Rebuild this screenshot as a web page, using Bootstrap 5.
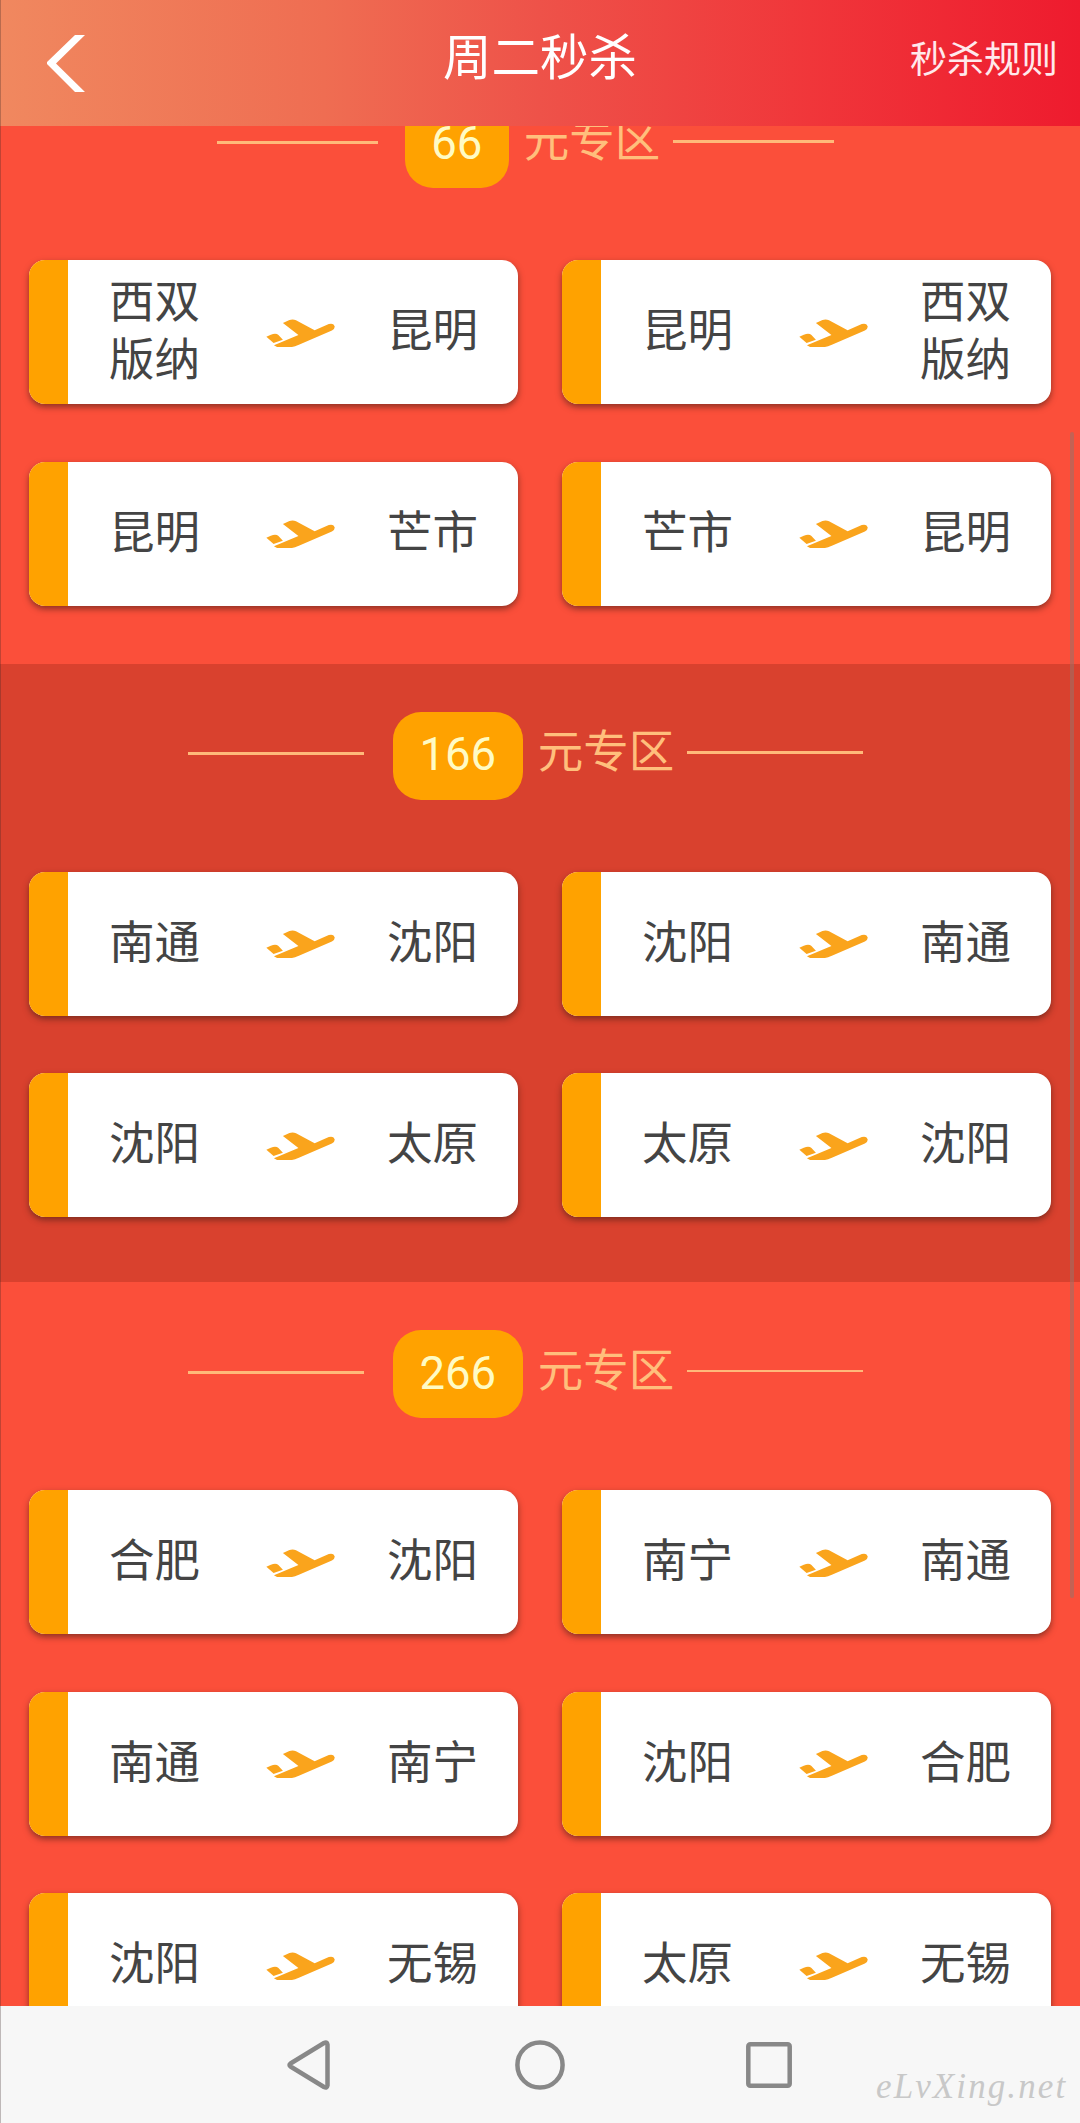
<!DOCTYPE html>
<html lang="zh-CN">
<head>
<meta charset="utf-8">
<meta name="viewport" content="width=device-width, initial-scale=1">
<title>周二秒杀</title>
<link rel="stylesheet" href="https://cdn.jsdelivr.net/npm/bootstrap@5.3.0/dist/css/bootstrap.min.css">
<style>
body { font-family: Roboto, "Noto Sans CJK SC", sans-serif; background: #fb4f3a; }
.phone { width: 1080px; height: 2123px; overflow: hidden; }
.phone-edge { width: 1px; height: 100%; left: 0; top: 0; background: rgba(60,40,40,.3); z-index: 5; }
.topbar { height: 126px; padding: 0 22px 0 47px; background: linear-gradient(90deg, #f0885f 0%, #ef6d52 30%, #ee5249 50%, #f0363a 75%, #ee1b2e 100%); z-index: 2; }
.topbar-side { flex: 1 1 0; }
.topbar-title { font-size: 48.5px; line-height: 70px; margin: -8px 25px 0 0; }
.topbar-side.text-end { margin-left: -25px; }
.topbar-side.text-start { margin-right: -25px; }
.topbar-title { margin-left: 25px; margin-right: 25px; transform: translateX(-12.5px); }
.topbar-rule { font-size: 37px; line-height: 54px; margin-top: -4px; color: #ffe9ec; }
.zone { padding: 48px 29px 65px 29px; background: #fb4f3a; }
.zone-first { margin-top: -74px; padding-bottom: 58px; }
.zone-dark { background: #d9412e; }
.zone-head { height: 88px; margin-bottom: 72px; padding-right: 29px; }
.zone-line { width: 176px; height: 3px; background: #ffb97a; margin-top: -4px; }
.zone-line.end-line { margin-top: -6px; }
.zone-line.thin-line { height: 2px; margin-top: -7px; }
.zone-first .zone-line { width: 161px; }
.price-tag { width: 130px; height: 88px; border-radius: 28px; background: #ffa200; color: #fffbc4; font-size: 45.5px; margin: 0 15px 0 29px; }
.zone-first .price-tag { width: 104px; margin-left: 27px; }
.zone-name { color: #ffbf7c; font-size: 45.5px; line-height: 60px; margin: -5px 13px 0 0; }
.routes { display: grid; grid-template-columns: 489px 489px; column-gap: 44px; row-gap: 57.6px; }
.route { height: 144px; border-radius: 16px; overflow: hidden; background: #fff; box-shadow: 0 3px 6px rgba(70,30,20,.6); color: #444; }
.route-bar { width: 39px; background: #ffa200; }
.route-body { padding: 0 40px 0 41px; }
.city { width: 91px; font-size: 45.5px; line-height: 58px; }
.plane { width: 69px; height: 28px; fill: #faa41c; margin: 1px 0 0 13px; }
.scroll-thumb { left: 1070px; top: 432px; width: 4px; height: 1166px; border-radius: 2px; background: rgba(150,115,105,.55); z-index: 4; }
.sysnav { height: 117px; background: #f7f7f7; z-index: 3; padding-left: 287px; }
.sysnav svg { fill: none; stroke: #888; stroke-width: 4.5; stroke-linejoin: round; }
.nav-back { width: 43px; margin-right: 185px; }
.nav-home { width: 50px; margin-right: 181px; }
.sitemark { left: 876px; top: 2065px; font: italic 35px/44px "Liberation Serif", serif; letter-spacing: 2.1px; color: #c8c8c8; z-index: 6; }
</style>
<script src="https://cdn.jsdelivr.net/npm/bootstrap@5.3.0/dist/js/bootstrap.bundle.min.js"></script>
</head>
<body>
<svg class="d-none" xmlns="http://www.w3.org/2000/svg">
  <symbol id="plane" viewBox="775 235 200 82" preserveAspectRatio="none">
    <path d="M776 287L789 281Q804 275 811 282L824 296L797 305Z"/>
    <path d="M798 312L869 282L824 247L843 238Q853 234 862 239L916 268L957 250Q970 246 974 256Q975 265 966 269L872 310Q858 317 850 317H807Z"/>
  </symbol>
</svg>
<div class="phone position-relative d-flex flex-column">
  <div class="phone-edge position-absolute"></div>
  <header class="topbar d-flex align-items-center flex-shrink-0 position-relative text-white">
    <div class="topbar-side text-start">
      <svg class="d-block" width="39" height="57" viewBox="0 0 39 57"><path d="M28 0H38L9 28.500L38 57H28L0 29V27Z" fill="#fff"/></svg>
    </div>
    <div class="topbar-title">周二秒杀</div>
    <div class="topbar-side text-end"><span class="topbar-rule d-inline-block">秒杀规则</span></div>
  </header>
  <main id="zones" class="flex-grow-1 overflow-hidden" style="min-height:0"></main>
  <div class="scroll-thumb position-absolute"></div>
  <nav class="sysnav d-flex align-items-center flex-shrink-0 position-relative">
    <svg class="nav-back" height="50" viewBox="0 0 43 50"><path d="M40.5 4.5V45.5Q40 48.5 37 47L3.5 26.5Q1.5 25 3.5 23.5L37 3Q40 1.5 40.5 4.5Z"/></svg>
    <svg class="nav-home" height="50" viewBox="0 0 50 50"><circle cx="25" cy="25" r="22.6"/></svg>
    <svg width="46" height="46" viewBox="0 0 46 46"><rect x="2.3" y="2.3" width="41.4" height="41.4" rx="2"/></svg>
  </nav>
  <div class="sitemark position-absolute">eLvXing.net</div>
</div>
<script>
const zones = [
  { price: 66, cls: 'zone-first', routes: [['西双版纳','昆明'],['昆明','西双版纳'],['昆明','芒市'],['芒市','昆明']] },
  { price: 166, cls: 'zone-dark', routes: [['南通','沈阳'],['沈阳','南通'],['沈阳','太原'],['太原','沈阳']] },
  { price: 266, cls: '', line: 'thin-line', routes: [['合肥','沈阳'],['南宁','南通'],['南通','南宁'],['沈阳','合肥'],['沈阳','无锡'],['太原','无锡']] }
];
document.getElementById('zones').innerHTML = zones.map(z => `
  <section class="zone ${z.cls}">
    <div class="zone-head d-flex align-items-center justify-content-center">
      <span class="zone-line"></span>
      <span class="price-tag d-flex align-items-center justify-content-center">${z.price}</span>
      <span class="zone-name">元专区</span>
      <span class="zone-line end-line ${z.line || ''}"></span>
    </div>
    <div class="routes">${z.routes.map(([a, b]) => `
      <div class="route d-flex">
        <div class="route-bar flex-shrink-0"></div>
        <div class="route-body d-flex flex-grow-1 align-items-center justify-content-between">
          <div class="city">${a}</div>
          <svg class="plane"><use href="#plane"/></svg>
          <div class="city">${b}</div>
        </div>
      </div>`).join('')}
    </div>
  </section>`).join('');
</script>
</body>
</html>
